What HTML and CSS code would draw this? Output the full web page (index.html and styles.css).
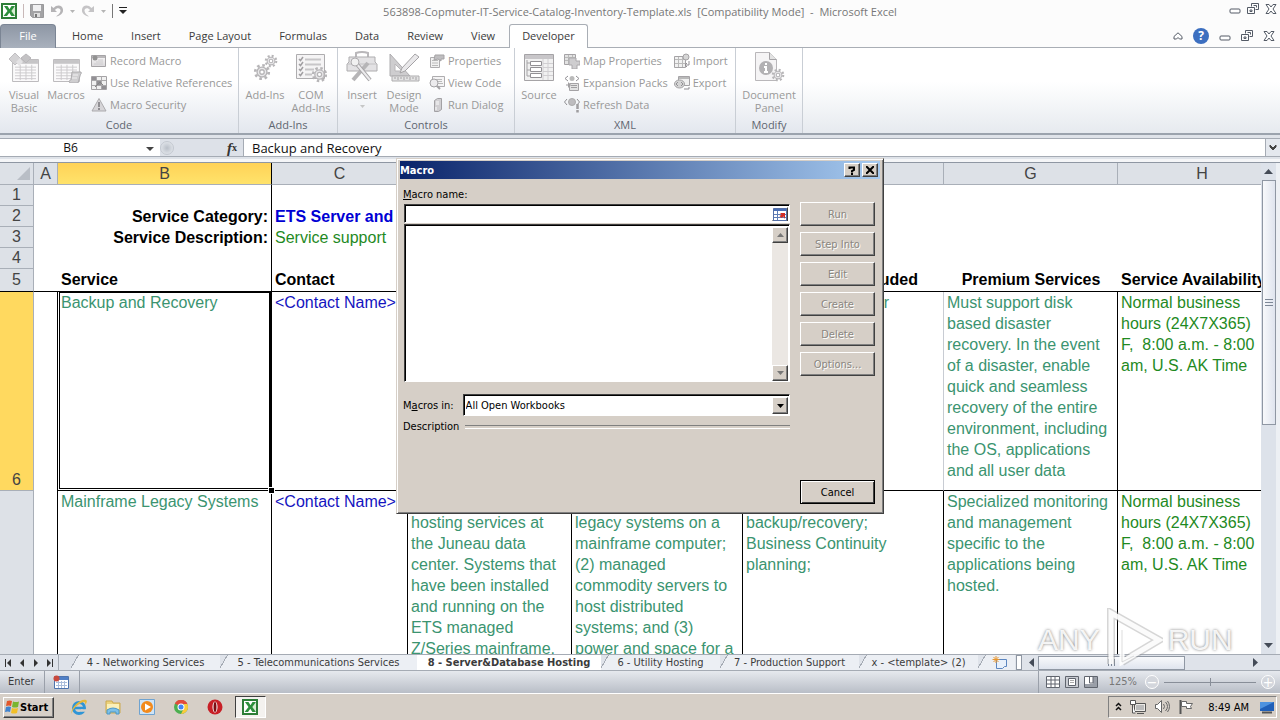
FILE: index.html
```html
<!DOCTYPE html>
<html lang="en">
<head>
	<meta charset="UTF-8">
	<meta name="viewport" content="width=device-width, initial-scale=1">
	<title>Microsoft Excel</title>
	<link rel="stylesheet" href="styles.css">
</head>
<body>

	<!-- shared icons -->
	<svg class="defs" width="0" height="0">
		<defs>
			<linearGradient id="grey" x1="0" y1="0" x2="0" y2="1"><stop offset="0" stop-color="#f8f7f8"/><stop offset="1" stop-color="#d2d0d3"/></linearGradient>
			<symbol id="excel" viewBox="0 0 16 16">
				<rect x="1" y="1" width="14" height="14" fill="#fff" stroke="#2c7d36" stroke-width="2"/>
				<path d="M10 4h4v8h-4z" fill="#d8ecd3"/>
				<path d="M3 3h3.500l2 3.200L10.500 3H14L10.300 8 14 13h-3.600L8.300 9.800 6 13H2.500l4-5z" fill="#2c8f3b"/>
			</symbol>
			<symbol id="minimize" viewBox="0 0 12 12"><rect x="1" y="6" width="10" height="4" rx="1" fill="#fff" stroke="#545b66"/></symbol>
			<symbol id="restore" viewBox="0 0 12 12"><path d="M4.500 3.500v-3h7v6h-3M.500 4.500h7v6h-7zM3 7h2v1.500H3zM6.500 2.500h3v2" fill="none" stroke="#545b66"/></symbol>
			<symbol id="close" viewBox="0 0 12 12"><path d="M1 1.500h3L6 4l2-2.500h3L8 6l3 4.500H8L6 8l-2 2.500H1L4 6z" fill="#fff" stroke="#545b66"/></symbol>
			<symbol id="gear" viewBox="0 0 20 20">
				<circle cx="10" cy="10" r="7.500" fill="none" stroke="#a5a3a6" stroke-width="3" stroke-dasharray="2.900 3"/>
				<circle cx="10" cy="10" r="5.500" fill="#e4e3e5" stroke="#a5a3a6" stroke-width="1.500"/>
				<circle cx="10" cy="10" r="2.500" fill="#fff" stroke="#a5a3a6" stroke-width="1.500"/>
			</symbol>
			<symbol id="sheetgrid" viewBox="0 0 28 24">
				<path d="M.500.500h27v23H.500z" fill="#fbfafb" stroke="#a8a6a9"/>
				<path d="M1 1h26v4H1z" fill="#b9b7ba"/>
				<path d="M3 8.500h22M3 11.500h22M3 14.500h22M3 17.500h22M3 20.500h22M8.500 6v16M14.500 6v16M20.500 6v16" stroke="#bfbdc0"/>
			</symbol>
		</defs>
	</svg>

	<!-- Title bar -->
	<header class="titlebar">
		<div class="quick">
			<svg width="16" height="16"><use href="#excel"/></svg>
			<span class="bar"></span>
			<button aria-label="Save"><svg width="14" height="14"><path d="M.500.500h13v13h-11l-2-2z" fill="#a3a3a5" stroke="#99999b"/><path d="M3 1h8v6H3z" fill="#f0f0f1"/><path d="M4 9h6v4H4z" fill="#ddd"/><path d="M5 10h2v3H5z" fill="#777"/></svg></button>
			<button aria-label="Undo"><svg width="14" height="14"><path d="M1 2v6h6L5 6c2-3 6-2 5.500 1C10 9.500 8 11 6 12.500c4-.500 7.500-3 7-7C12.500 1 7 0 3.500 4z" fill="#b5b4b6"/></svg></button>
			<svg width="5" height="3"><path d="M0 0h5L2.500 3z" fill="#b5b5b5"/></svg>
			<button aria-label="Redo"><svg width="14" height="14"><path d="M13 2v6H7l2-2C7 3 3 4 3.500 7c.500 2.500 2.500 4 4.500 5.500C4 12 .500 9.500 1 5.500 1.500 1 7 0 10.500 4z" fill="#c5c4c6"/></svg></button>
			<svg width="5" height="3"><path d="M0 0h5L2.500 3z" fill="#b5b5b5"/></svg>
			<span class="bar dark"></span>
			<button aria-label="Customize"><svg width="8" height="8"><path d="M0 .500h8" stroke="#222"/><path d="M0 3h8L4 7z" fill="#222"/></svg></button>
		</div>
		<h1>563898-Copmuter-IT-Service-Catalog-Inventory-Template.xls&nbsp; [Compatibility Mode] &nbsp;-&nbsp; Microsoft Excel</h1>
		<div class="winbtns">
			<button aria-label="Minimize"><svg width="12" height="12"><use href="#minimize"/></svg></button>
			<button aria-label="Restore"><svg width="12" height="12"><use href="#restore"/></svg></button>
			<button aria-label="Close"><svg width="12" height="12"><use href="#close"/></svg></button>
		</div>
	</header>

	<nav class="tabs">
		<button class="file">File</button>
		<button>Home</button>
		<button>Insert</button>
		<button>Page Layout</button>
		<button>Formulas</button>
		<button>Data</button>
		<button>Review</button>
		<button>View</button>
		<button class="current">Developer</button>
		<div class="winbtns docbtns">
			<button aria-label="Minimize ribbon"><svg width="10" height="8"><path d="M5 .800 9 4.500v2.500H6.500L5 5.500 3.500 7H1V4.500z" fill="#fff" stroke="#545b66"/></svg></button>
			<button aria-label="Help" class="help">?</button>
			<button aria-label="Minimize window"><svg width="12" height="12"><use href="#minimize"/></svg></button>
			<button aria-label="Restore window"><svg width="12" height="12"><use href="#restore"/></svg></button>
			<button aria-label="Close window"><svg width="12" height="12"><use href="#close"/></svg></button>
		</div>
	</nav>

	<!-- Ribbon -->
	<section class="ribbon">
		<div class="group code">
			<div class="tools">
				<button class="big" disabled>
					<svg width="32" height="32"><use href="#sheetgrid" x="4" y="8" width="27" height="23"/><path d="m7 2 6 6-6 6-6-6z" fill="#c9c7ca" stroke="#b2b0b3"/><path d="m18 3 5 4-5 5-5-5z" fill="#b5b3b6" stroke="#a8a6a9"/><path d="m12 7 3 4-4 4-3-4z" fill="#dddcde"/></svg>
					Visual<br>Basic
				</button>
				<button class="big" disabled>
					<svg width="32" height="32"><use href="#sheetgrid" x="3" y="8" width="27" height="23"/><path d="M22 21h9c1 2-1 2-1 4l-2 7h-8c-2-2 0-3 1-3z" fill="#c4c2c5" stroke="#99979a"/><path d="M23 24h5M22 27h5" stroke="#eee"/></svg>
					Macros
				</button>
				<div class="stack">
					<button disabled><svg width="16" height="16"><path d="M.500 2.500h14v11H.500z" fill="url(#grey)" stroke="#8f8d90"/><path d="M1 3h13v2H1z" fill="#a9a7aa"/><circle cx="4" cy="5" r="2.500" fill="#777"/><path d="M7 7h5M5 9h7M3 11h9" stroke="#c2c0c3"/></svg>Record Macro</button>
					<button disabled><svg width="16" height="16"><path d="M.500 1.500h15v13H.500z" fill="#eee" stroke="#8f8d90"/><path d="M1 5.500h14M1 10.500h14M5.500 1v13M10.500 1v13" stroke="#969497"/><path d="M1 2h4v3H1zM11 11h4v3h-4zM6 6h4v4H6z" fill="#77757a"/><path d="m4 12 5-5 3 3" fill="none" stroke="#666"/></svg>Use Relative References</button>
					<button disabled><svg width="16" height="16"><path d="M8 1.500 15 14H1z" fill="#d0ced1" stroke="#9b999c"/><path d="M8 5v5M8 11v2" stroke="#77757a" stroke-width="2"/></svg>Macro Security</button>
				</div>
			</div>
			<p>Code</p>
		</div>
		<div class="group addins">
			<div class="tools">
				<button class="big" disabled>
					<svg width="32" height="32"><use href="#gear" x="4" y="12" width="18" height="18"/><use href="#gear" x="15" y="3" width="14" height="14"/></svg>
					Add-Ins
				</button>
				<button class="big" disabled>
					<svg width="32" height="32"><path d="M1.500 3.500h28v24h-28z" fill="#f3f2f3" stroke="#9b999c"/><path d="M10 8.500h16M10 13.500h16M10 18.500h9M10 23.500h7" stroke="#bbb9bc" stroke-width="2"/><path d="m4 8 1.500 1.500L8 6M4 13l1.500 1.500L8 11M4 18l1.500 1.500L8 16M4 23l1.500 1.500L8 21" fill="none" stroke="#8a888b" stroke-width="1.500"/><use href="#gear" x="16" y="15" width="17" height="17"/></svg>
					COM<br>Add-Ins
				</button>
			</div>
			<p>Add-Ins</p>
		</div>
		<div class="group controls">
			<div class="tools">
				<button class="big" disabled>
					<svg width="32" height="32"><path d="M10 6V2q6-2 12 0v4" fill="none" stroke="#a8a6a9" stroke-width="2"/><path d="M3 6h26v5l2 2v7H1v-7l2-2z" fill="#dddcde" stroke="#9b999c"/><path d="M1 13h30" stroke="#b5b3b6"/><path d="M22 12 7 29" stroke="#a5a3a6" stroke-width="4"/><path d="M10 12l14 17" stroke="#8f8d90" stroke-width="4"/><path d="M10 12l14 17" stroke="#e8e7e9" stroke-width="2"/><circle cx="9" cy="11" r="4" fill="#eee" stroke="#9b999c"/></svg>
					Insert
					<svg class="drop" width="5" height="3"><path d="M0 0h5L2.500 3z" fill="#bbb"/></svg>
				</button>
				<button class="big" disabled>
					<svg width="32" height="32"><path d="M2 3v22h20z" fill="#c3c1c4" stroke="#9b999c"/><path d="M7 13v7h7z" fill="#fff" stroke="#a8a6a9"/><path d="M27 3l4 3-14 14-5 2 2-5z" fill="#e4e3e5" stroke="#8f8d90"/><path d="M4 25h27v5H4z" fill="#ddd" stroke="#9b999c"/><path d="M7 26v2M10 26v3M13 26v2M16 26v3M19 26v2M22 26v3M25 26v2M28 26v3" stroke="#8f8d90"/></svg>
					Design<br>Mode
				</button>
				<div class="stack">
					<button disabled><svg width="16" height="16"><path d="M1.500 4.500h9v10h-9z" fill="#eee" stroke="#9b999c"/><path d="M3 7.500h6M3 10h6M3 12.500h6" stroke="#aaa"/><path d="M6 2h9v4h-3v2l-3-2-4 1z" fill="#b0aeb1" stroke="#8f8d90"/></svg>Properties</button>
					<button disabled><svg width="16" height="16"><path d="M3.500 1.500h12v10h-12z" fill="#f3f2f3" stroke="#9b999c"/><path d="M6 4.500h7M6 6.500h7M9 8.500h5" stroke="#aaa"/><circle cx="5" cy="8" r="4" fill="#e8e7e9" stroke="#8f8d90"/><path d="m8 11 3 3" stroke="#8f8d90" stroke-width="2"/></svg>View Code</button>
					<button disabled><svg width="16" height="16"><path d="M5.500 3.500l3-2h4v11l-3 2h-4z" fill="#c9c7ca" stroke="#8f8d90"/><path d="M7 5h3M7 7h3M7 10v3" stroke="#fff"/></svg>Run Dialog</button>
				</div>
			</div>
			<p>Controls</p>
		</div>
		<div class="group xml">
			<div class="tools">
				<button class="big" disabled>
					<svg width="32" height="32"><path d="M1.500 3.500h29v26h-29z" fill="#eee" stroke="#8f8d90"/><path d="M2 4h28v4H2z" fill="#bbb9bc"/><path d="M20 8v21M25 8v21M20 12.500h10M20 16.500h10M20 20.500h10M20 24.500h10" stroke="#c6c4c7"/><path d="M4 9v16h4M4 12h4M4 19h4" fill="none" stroke="#8f8d90"/><path d="M7.500 10.500h11v4h-11zM7.500 16.500h11v4h-11zM7.500 22.500h11v4h-11z" fill="#fff" stroke="#77757a"/></svg>
					Source
				</button>
				<div class="stack">
					<button disabled><svg width="16" height="16"><path d="M.500 1.500h11v10H.500z" fill="#ddd" stroke="#8f8d90"/><path d="M1 4.500h10M1 7.500h10M4.500 2v9M8.500 2v9" stroke="#aaa"/><path d="M5 5h7v3h4v4h-3v4H8v-4H5z" fill="#c3c1c4" stroke="#969497"/></svg>Map Properties</button>
					<button disabled><svg width="16" height="16"><path d="M4 1 1 3.500 4 6M12 1l3 2.500L12 6" fill="none" stroke="#77757a"/><circle cx="8" cy="3.500" r="2.500" fill="#aaa"/><path d="M5.500 8.500h9v7h-9z" fill="#ddd" stroke="#8f8d90"/><path d="M7 10.500h6M7 12.500h6M2 10h5M4.500 7.500v5" stroke="#8a888b"/></svg>Expansion Packs</button>
					<button disabled><svg width="16" height="16"><path d="M3 2 .500 5 3 8M13 2l2.500 3L13 8" fill="none" stroke="#77757a"/><circle cx="8" cy="5" r="3.500" fill="#b0aeb1" stroke="#999"/><path d="M13.500 7v5M13.500 13v2.500" stroke="#8a888b" stroke-width="2.500"/></svg>Refresh Data</button>
				</div>
				<div class="stack">
					<button disabled><svg width="16" height="16"><path d="M.500 3.500h11v11H.500z" fill="#eee" stroke="#8f8d90"/><path d="M1 6.500h10M1 10.500h10M4.500 4v10M8.500 4v10" stroke="#aaa"/><circle cx="12" cy="4" r="3" fill="#ccc" stroke="#8f8d90"/><path d="M15 8v4h-4m2-2-2 2 2 2" fill="none" stroke="#77757a"/></svg>Import</button>
					<button disabled><svg width="16" height="16"><path d="M4.500 1.500h11v9h-11z" fill="#eee" stroke="#8f8d90"/><path d="M5 2h10v2H5z" fill="#aaa"/><ellipse cx="5.500" cy="9" rx="5" ry="4" fill="#ccc" stroke="#8f8d90"/><path d="m4 7-2 2 2 2m3-4 2 2-2 2M15 12v2h-5" fill="none" stroke="#77757a"/></svg>Export</button>
				</div>
			</div>
			<p>XML</p>
		</div>
		<div class="group modify">
			<div class="tools">
				<button class="big" disabled>
					<svg width="32" height="32"><path d="M2.500 1.500h14l7 7v21h-21z" fill="#f3f2f3" stroke="#a8a6a9"/><path d="M16.500 1.500v7h7" fill="#ddd" stroke="#8f8d90"/><circle cx="13" cy="17" r="7" fill="#a09ea1"/><path d="M13 12v2M11 16h2v5m-2 0h4" stroke="#fff" stroke-width="2" fill="none"/><use href="#gear" x="18" y="17" width="14" height="14"/></svg>
					Document<br>Panel
				</button>
			</div>
			<p>Modify</p>
		</div>
	</section>

	<!-- Formula bar -->
	<section class="formulabar">
		<input class="namebox" aria-label="Name box" value="B6">
		<span class="namedrop"><svg width="8" height="5"><path d="M0 0h8L4 4z" fill="#444"/></svg></span>
		<span class="fx"><span class="knob"></span><i>f</i><sub>x</sub></span>
		<input class="formula" aria-label="Formula" value="Backup and Recovery">
		<button class="expand" aria-label="Expand formula bar"><svg width="8" height="7"><path d="m1 1 3 3 3-3v2L4 6 1 3z" stroke="#444" fill="#444"/></svg></button>
	</section>

	<!-- Worksheet -->
	<main class="sheet">
		<div class="cells">
			<table>
				<colgroup><col class="c-row"><col class="c-a"><col class="c-b"><col class="c-c"><col class="c-d"><col class="c-e"><col class="c-f"><col class="c-g"><col class="c-h"></colgroup>
				<thead>
					<tr><th class="corner"><svg width="13" height="13"><path d="M13 0v13H0z" fill="#b9bec6"/></svg></th><th>A</th><th class="sel">B</th><th>C</th><th>D</th><th>E</th><th>F</th><th>G</th><th>H</th></tr>
				</thead>
				<tbody>
					<tr><th>1</th><td></td><td class="r"></td><td colspan="6"></td></tr>
					<tr><th>2</th><td></td><td class="r label">Service Category:</td><td colspan="6" class="category">ETS Server and</td></tr>
					<tr><th>3</th><td></td><td class="r label">Service Description:</td><td colspan="6" class="green">Service support</td></tr>
					<tr><th>4</th><td></td><td class="r"></td><td colspan="6"></td></tr>
					<tr class="heads"><th>5</th><td></td><td class="r">Service</td><td>Contact</td><td></td><td></td><td class="included">Included</td><td class="mid">Premium Services</td><td>Service Availability</td></tr>
					<tr class="row6">
						<th class="sel">6</th><td class="r open"></td>
						<td class="r sea active">Backup and Recovery</td>
						<td class="r contact">&lt;Contact Name&gt;</td>
						<td class="r"></td><td class="r"></td>
						<td class="lite sea tail">r</td>
						<td class="r sea">Must support disk<br>based disaster<br>recovery. In the event<br>of a disaster, enable<br>quick and seamless<br>recovery of the entire<br>environment, including<br>the OS, applications<br>and all user data</td>
						<td class="green">Normal business<br>hours (24X7X365)<br>F,&nbsp; 8:00 a.m. - 8:00<br>am, U.S. AK Time</td>
					</tr>
					<tr class="row7">
						<th></th><td class="r"></td>
						<td class="r sea">Mainframe Legacy Systems</td>
						<td class="r contact">&lt;Contact Name&gt;</td>
						<td class="r sea"><br>hosting services at<br>the Juneau data<br>center. Systems that<br>have been installed<br>and running on the<br>ETS managed<br>Z/Series mainframe.</td>
						<td class="r sea"><br>legacy systems on a<br>mainframe computer;<br>(2) managed<br>commodity servers to<br>host distributed<br>systems; and (3)<br>power and space for a</td>
						<td class="r sea"><br>backup/recovery;<br>Business Continuity<br>planning;</td>
						<td class="r sea">Specialized monitoring<br>and management<br>specific to the<br>applications being<br>hosted.</td>
						<td class="green">Normal business<br>hours (24X7X365)<br>F,&nbsp; 8:00 a.m. - 8:00<br>am, U.S. AK Time</td>
					</tr>
				</tbody>
			</table>
		</div>
		<div class="vscroll">
			<span class="arrow"><svg width="9" height="5"><path d="M0 5h9L4.500 0z" fill="#444b57"/></svg></span>
			<span class="thumb"><svg width="8" height="8"><path d="M0 .500h8M0 3.500h8M0 6.500h8" stroke="#7d8796"/></svg></span>
			<span class="arrow last"><svg width="9" height="5"><path d="M0 0h9L4.500 5z" fill="#444b57"/></svg></span>
		</div>
	</main>

	<footer class="sheettabs">
		<div class="arrows">
			<svg width="6" height="8"><path d="M.500 0v8" stroke="#333"/><path d="M6 0v8L2 4z" fill="#333"/></svg>
			<svg width="6" height="8"><path d="M5 0v8L1 4z" fill="#333"/></svg>
			<svg width="6" height="8"><path d="M1 0v8l4-4z" fill="#333"/></svg>
			<svg width="6" height="8"><path d="M5.500 0v8" stroke="#333"/><path d="M0 0v8l4-4z" fill="#333"/></svg>
		</div>
		<div class="names">
			<button>4 - Networking Services</button>
			<button>5 - Telecommunications Services</button>
			<button class="on">8 - Server&amp;Database Hosting</button>
			<button>6 - Utility Hosting</button>
			<button>7 - Production Support</button>
			<button>x - &lt;template&gt; (2)</button>
			<button aria-label="Insert worksheet"><svg width="16" height="13"><path d="M4.500 3.500h10v7h-2l-2 2h-6z" fill="#e9f1fb" stroke="#5c86c0"/><path d="M4 0v7M.500 3.500h7M1.500 1l5 5M6.500 1l-5 5" stroke="#e8962e"/></svg></button>
		</div>
		<span class="splitter"></span>
		<div class="hscroll">
			<svg width="5" height="9"><path d="M5 0v9L0 4.500z" fill="#444b57"/></svg>
			<span class="thumb"><svg width="8" height="7"><path d="M.500 0v7M3.500 0v7M6.500 0v7" stroke="#7d8796"/></svg></span>
			<svg class="last" width="5" height="9"><path d="M0 0v9l5-4.500z" fill="#444b57"/></svg>
		</div>
	</footer>

	<section class="status">
		<span class="mode">Enter</span>
		<button aria-label="Record macro"><svg width="16" height="14"><path d="M1.500 1.500h14v12h-14z" fill="#fff" stroke="#4d74ad"/><path d="M2 2h13v3H2z" fill="#4f7fc6"/><path d="M3 7.500h11M3 10.500h11M5.500 6v7M8.500 6v7M11.500 6v7" stroke="#a9bddb"/><circle cx="3.500" cy="3.500" r="3" fill="#c8493d"/></svg></button>
		<div class="zoom">
			<button aria-label="Normal"><svg width="14" height="12"><path d="M.500.500h13v11H.500zM1 4h12M1 8h12M5 1v10M9 1v10" fill="#fff" stroke="#60656e"/></svg></button>
			<button aria-label="Page layout"><svg width="14" height="12"><path d="M.500.500h13v11H.500z" fill="#c9ccd2" stroke="#60656e"/><path d="M3.500 2.500h7v7h-7z" fill="#fff" stroke="#60656e"/><path d="M5 4.500h4M5 6.500h4" stroke="#aaa"/></svg></button>
			<button aria-label="Page break"><svg width="14" height="12"><path d="M.500.500h13v11H.500z" fill="#fff" stroke="#60656e"/><path d="M9 1h4v10H1V8h8z" fill="#9a9fa8"/><path d="M5.500 1v6H9V1" fill="none" stroke="#60656e"/></svg></button>
			<span class="percent">125%</span>
			<button class="round" aria-label="Zoom out">−</button>
			<input type="range" aria-label="Zoom" min="0" max="100" value="50">
			<button class="round" aria-label="Zoom in">+</button>
		</div>
	</section>

	<!-- Taskbar -->
	<section class="taskbar">
		<button class="start"><svg width="16" height="16"><path d="M3 2q3-1 5 0L7 7Q5 6 2 7z" fill="#e2572b"/><path d="M9 2.500q3 1 6 0L14 8q-3 1-6 0z" fill="#79b530"/><path d="M2 8q3-1 5 0l-1 5q-2-1-5 0z" fill="#3f83cf"/><path d="M8 9q3 1 6 0l-1 5q-3 1-6 0z" fill="#f2bf27"/></svg>Start</button>
		<div class="apps">
			<button aria-label="Internet Explorer"><svg width="18" height="18"><circle cx="9" cy="10" r="5.500" fill="none" stroke="#2f95d6" stroke-width="3"/><path d="M4 10h11" stroke="#2f95d6" stroke-width="2.500"/><path d="M11 12.500h5" stroke="#d6cfc7" stroke-width="2.500"/><path d="M2 16C-1 12 10 0 16 2c2 1 0 4-1 5 1-3-1-4-4-2C6 8 1 13 2 16z" fill="#e6b93a"/></svg></button>
			<button aria-label="Explorer"><svg width="18" height="18"><path d="M2 3h6l1 2h7v10H2z" fill="#ecd27c" stroke="#cba94e"/><path d="M3 6h12v5H3z" fill="#fbf0b8"/><path d="M3 16v-4q6-4 12 0v4h-3v-2H6v2z" fill="#7cc0e8" stroke="#4b98c9"/></svg></button>
			<button aria-label="Media Player"><svg width="18" height="18"><path d="M1.500 1.500h15v15h-15z" fill="#cfe4f6" stroke="#6fa3d0"/><circle cx="9" cy="9" r="6" fill="#f28a1c"/><path d="m7 5.500 6 3.500-6 3.500z" fill="#fff"/></svg></button>
			<button aria-label="Chrome"><svg width="18" height="18"><circle cx="9" cy="9" r="7" fill="#4caf50"/><path d="M3 5.500A7 7 0 0 1 15.300 6H9z" fill="#e24a3b"/><path d="M3 5.500 9 9V6h6.300A7 7 0 0 0 3 5.500z" fill="#e24a3b"/><path d="M15.300 6A7 7 0 0 1 9 16l3-6V6z" fill="#fbcb3c"/><circle cx="9" cy="9" r="3.500" fill="#fff"/><circle cx="9" cy="9" r="2.500" fill="#4285f4"/></svg></button>
			<button aria-label="Opera"><svg width="18" height="18"><circle cx="9" cy="9" r="7.500" fill="#c81f26"/><ellipse cx="9" cy="9" rx="2.500" ry="5.500" fill="#fff"/><ellipse cx="9" cy="9" rx="1.500" ry="5" fill="#7d0d12"/></svg></button>
			<button class="on" aria-label="Excel"><svg width="16" height="16"><use href="#excel"/></svg></button>
		</div>
		<div class="tray">
			<svg width="7" height="10"><path d="m1 4 2.500-2.500L6 4M1 8l2.500-2.500L6 8" fill="none" stroke="#111" stroke-width="1.500"/></svg>
			<svg width="16" height="16"><path d="M4.500 4.500h11v8h-11z" fill="#eceae6" stroke="#555"/><path d="M6 6h8v5H6z" fill="#bbb"/><path d="M7 14.500h7" stroke="#555"/><path d="M.500 1.500h5v4h-5zM2.500 6v8h3" fill="#fff" stroke="#555"/></svg>
			<svg width="16" height="16"><path d="M1.500 5.500h2l4-4v12l-4-4h-2z" fill="#fff" stroke="#666"/><path d="M9.500 5q2 2.500 0 5M11.500 3q4 4.500 0 9M13.500 2q4 5.500 0 11" fill="none" stroke="#666"/></svg>
			<svg width="16" height="16"><path d="M2.500 1v14" stroke="#555" stroke-width="2"/><path d="M3.500 2.500h5v2h6l-2 3 1 2h-5v-2h-5z" fill="#fff" stroke="#666"/></svg>
			<time>8:49 AM</time>
			<svg width="16" height="14"><path d="M1 2h14v9H1z" fill="#1f5fb8"/><path d="M1 2h14L1 9z" fill="#4d92df"/><path d="M3 12.500h10" stroke="#555" stroke-width="2"/></svg>
		</div>
	</section>

	<!-- Macro dialog -->
	<div class="dialog" role="dialog" aria-labelledby="dlgtitle">
		<div class="caption">
			<h2 id="dlgtitle">Macro</h2>
			<button aria-label="Help"><svg width="8" height="9"><path d="M1.500 3V1.500h4.500V4L4 5v1.500M4 7v2" fill="none" stroke="#000" stroke-width="2"/></svg></button>
			<button aria-label="Close"><svg width="8" height="8"><path d="m0 0 8 8M8 0 0 8" stroke="#000" stroke-width="2"/></svg></button>
		</div>
		<div class="body">
			<div class="fields">
				<label for="macro"><u>M</u>acro name:</label>
				<div class="sunken ref">
					<input id="macro" type="text">
					<button aria-label="Select range"><svg width="14" height="13"><path d="M.500.500h13v12H.500z" fill="#fff" stroke="#5570a8"/><path d="M1 1h12v2H1z" fill="#4a6fb5"/><path d="M1 6.500h12M1 9.500h12M4.500 3v9" stroke="#5f7db5"/><path d="M12 11V5H7l1.500 1.500-2 1.500 2 2 2-1.500z" fill="#d22c24"/></svg></button>
				</div>
				<div class="sunken list">
					<select multiple aria-label="Macros"></select>
					<div class="scroll">
						<button disabled aria-label="Up"><svg width="7" height="4"><path d="M0 4h7L3.500 0z" fill="#777"/></svg></button>
						<button disabled aria-label="Down"><svg width="7" height="4"><path d="M0 0h7L3.500 4z" fill="#777"/></svg></button>
					</div>
				</div>
				<div class="macrosin">
					<label for="where">M<u>a</u>cros in:</label>
					<div class="sunken combo">
						<select id="where"><option>All Open Workbooks</option></select>
						<span><svg width="7" height="4"><path d="M0 0h7L3.500 4z"/></svg></span>
					</div>
				</div>
				<div class="description">Description</div>
			</div>
			<div class="actions">
				<button disabled>Run</button>
				<button disabled>Step Into</button>
				<button disabled>Edit</button>
				<button disabled>Create</button>
				<button disabled>Delete</button>
				<button disabled>Options...</button>
				<button class="cancel">Cancel</button>
			</div>
		</div>
	</div>

	<!-- Watermark -->
	<div class="watermark">
		<span>ANY</span>
		<svg width="58" height="64"><path d="M6 56V5l48 27L17 54" fill="none" stroke="#999" stroke-opacity=".4" stroke-width="8"/><path d="M6 56V5l48 27L17 54V22l17 10-17 10" fill="none" stroke="#fff" stroke-opacity=".9" stroke-width="5"/><path d="M17 22v32l12-6" fill="none" stroke="#bbb" stroke-opacity=".5"/></svg>
		<span>RUN</span>
	</div>

</body>
</html>
```
FILE: styles.css
```css
* {
	box-sizing: border-box;
}
body {
	margin: 0;
	height: 100vh;
	display: flex;
	flex-direction: column;
	overflow: hidden;
	position: relative;
	background: #fff;
	font-family: "Open Sans", "Noto Sans", sans-serif;
	font-size: 11px;
	color: #3b3b3b;
}
button, input, select {
	font: inherit;
	color: inherit;
	margin: 0;
	padding: 0;
	border: 0;
	background: none;
	border-radius: 0;
}
svg {
	display: block;
	flex: none;
}
.defs {
	position: absolute;
}
h1, h2, p {
	margin: 0;
	font-size: 11px;
	font-weight: normal;
}

/* TITLE BAR */
.titlebar {
	height: 24px;
	flex: none;
	display: grid;
	grid-template-columns: 1fr auto 1fr;
	align-items: center;
	background: #fcfcfc;
}
.titlebar h1 {
	color: #777;
	padding-bottom: 1px;
}
.quick {
	display: flex;
	align-items: center;
	gap: 6px;
	padding: 0 0 2px 1px;
}
.bar {
	width: 1px;
	height: 14px;
	background: #c8b8b8;
}
.bar.dark {
	background: #777;
}
.winbtns {
	display: flex;
	align-items: center;
	justify-content: flex-end;
	gap: 6px;
	padding: 0 3px 6px 0;
}

/* RIBBON TABS */
.tabs {
	height: 24px;
	flex: none;
	display: flex;
	background: #fcfcfc;
	border-bottom: 1px solid #a9aeb5;
}
.tabs > button {
	padding: 0 14px 1px;
	height: 24px;
}
.tabs .file {
	width: 56px;
	margin-right: 2px;
	padding-bottom: 2px;
	color: #fff;
	background: linear-gradient(#8e97a5, #a9b1bd);
	border: 1px solid #7b8594;
	border-bottom: 0;
	border-radius: 4px 4px 0 0;
}
.tabs .current {
	background: #fff;
	border: 1px solid #a9aeb5;
	border-bottom: 0;
	border-radius: 3px 3px 0 0;
	padding: 0 12px 2px;
}
.docbtns {
	margin-left: auto;
	gap: 10px;
	padding: 0 5px 0 0;
}
.help {
	width: 16px;
	height: 16px;
	line-height: 16px;
	border-radius: 8px;
	background: #3c6fc0;
	color: #fff;
	font-size: 12px;
	font-weight: bold;
}

/* RIBBON */
.ribbon {
	height: 87px;
	flex: none;
	display: flex;
	background: linear-gradient(#fff 40%, #e6eaef);
	border-bottom: 2px solid #9ba3ad;
}
.group {
	display: flex;
	flex-direction: column;
	justify-content: space-between;
	padding: 3px 3px 1px;
	border-right: 1px solid #c9ced5;
	background: linear-gradient(#fff 40%, #e3e7ee);
}
.group p {
	text-align: center;
	line-height: 14px;
	color: #5f6670;
}
.code { width: 239px; }
.addins { width: 99px; }
.controls { width: 177px; }
.xml { width: 221px; }
.modify { width: 67px; }
.tools {
	display: flex;
	color: #999;
}
.tools svg {
	opacity: .8;
}
.big {
	min-width: 42px;
	display: block;
	line-height: 13px;
	align-self: flex-start;
}
.addins .big {
	min-width: 46px;
}
.modify .big {
	min-width: 60px;
}
.big svg {
	margin: 0 auto 5px;
}
.big .drop {
	margin: 4px auto 0;
}
.stack {
	margin-left: 4px;
}
.stack + .stack {
	margin-left: 6px;
}
.stack button {
	display: flex;
	align-items: center;
	gap: 3px;
	height: 22px;
	margin-top: -1px;
	margin-bottom: 1px;
	line-height: 16px;
	white-space: nowrap;
}

/* FORMULA BAR */
.formulabar {
	height: 27px;
	flex: none;
	display: flex;
	padding: 3px 0 2px;
	background: #dfe3e9;
	border-bottom: 3px solid #f5f6f8;
	font-size: 12px;
	color: #111;
}
.formulabar > * {
	border: 1px solid #a5abb4;
	border-width: 1px 0;
	background: #fff;
}
.formulabar .namebox {
	width: 141px;
	text-align: center;
}
.namedrop {
	width: 19px;
	padding: 8px 0 0 5px;
}
.formulabar .fx {
	width: 83px;
	display: flex;
	align-items: center;
	background: #dde1e8;
	font-family: "Liberation Serif", serif;
	font-weight: bold;
	font-size: 15px;
	line-height: 18px;
	color: #333;
}
.fx .knob {
	width: 14px;
	height: 14px;
	margin-right: auto;
	border-radius: 7px;
	background: radial-gradient(#b9bfc8, #eceff3);
	border: 1px solid #c3c8d0;
}
.fx sub {
	font-size: 10px;
	padding-right: 6px;
}
.formulabar .formula {
	flex: 1;
	border-left: 1px solid #a5abb4;
	padding-left: 8px;
	font-size: 13px;
}
.formulabar .expand {
	width: 15px;
	padding-left: 3px;
	background: #e4e8ee;
	border-left: 1px solid #a5abb4;
}

/* WORKSHEET */
.sheet {
	flex: 1;
	min-height: 0;
	display: flex;
	border-top: 1px solid #8f97a3;
}
.cells {
	flex: 1;
	min-width: 0;
	overflow: hidden;
}
table {
	table-layout: fixed;
	width: 1318px;
	border-spacing: 0;
	font-family: "Liberation Sans", Arial, sans-serif;
	font-size: 16px;
	line-height: 21px;
	color: #000;
}
.c-row { width: 34px; }
.c-a { width: 24px; }
.c-b { width: 214px; }
.c-c { width: 136px; }
.c-d { width: 164px; }
.c-e { width: 171px; }
.c-f { width: 201px; }
.c-g { width: 174px; }
.c-h { width: 200px; }
th {
	padding: 0;
	font-weight: normal;
	line-height: 20px;
	color: #444;
	background: #dde1e7;
	border-right: 1px solid #a9afb8;
	border-bottom: 1px solid #a9afb8;
}
thead th {
	height: 22px;
}
thead th:last-child {
	padding-right: 31px;
}
thead th.sel {
	background: linear-gradient(#ffd257, #ffe36b);
	border-right-color: #000;
}
tbody th.sel {
	background: #ffd95f;
	vertical-align: bottom;
}
.corner svg {
	margin-left: 17px;
}
td {
	padding: 0 3px;
	height: 21px;
	vertical-align: top;
	white-space: nowrap;
}
td.r {
	border-right: 1px solid #000;
}
td.lite {
	border-right: 1px solid #c8ccd3;
}
.label {
	text-align: right;
	font-weight: bold;
}
.category {
	font-weight: bold;
	color: #0000d4;
}
.green {
	color: #1f8a1f;
}
.sea {
	color: #3b9470;
}
.contact {
	color: #1414c0;
}
.heads td {
	font-weight: bold;
}
.heads td, .heads th {
	height: 23px;
	border-bottom: 1px solid #000;
}
.heads .included {
	text-align: right;
	padding-right: 26px;
}
.mid {
	text-align: center;
}
.tail {
	text-align: right;
	padding-right: 54px;
}
.row6 td {
	height: 199px;
	border-bottom: 1px solid #000;
}
.row6 .open {
	border-bottom: 0;
}
.row7 td {
	height: 240px;
}
/* double frame of the cell being edited */
.active {
	position: relative;
}
.active::after {
	content: "";
	position: absolute;
	top: 0;
	right: -1px;
	bottom: 1px;
	left: 1px;
	border: 1px solid #000;
	border-right-width: 3px;
}
/* fill handle */
.active::before {
	content: "";
	position: absolute;
	right: -3px;
	bottom: -3px;
	width: 5px;
	height: 5px;
	background: #000;
	box-shadow: 0 0 0 1px #fff;
	z-index: 1;
}

/* SCROLLBARS */
.vscroll {
	width: 19px;
	display: flex;
	flex-direction: column;
	align-items: center;
	background: #dde2ea;
	border-right: 4px solid #edf0f4;
}
.vscroll .arrow {
	padding: 6px 0;
}
.vscroll .last {
	margin-top: auto;
}
.vscroll .thumb {
	width: 14px;
	height: 245px;
	display: flex;
	align-items: center;
	justify-content: center;
	background: linear-gradient(90deg, #f8f9fb, #dfe4ee);
	border: 1px solid #8f97a3;
}

/* SHEET TABS, STATUS, TASKBAR */
.sheettabs, .status, .taskbar, .dialog {
	font-family: "DejaVu Sans Condensed", "DejaVu Sans", sans-serif;
	font-size: 11px;
}
.sheettabs {
	height: 17px;
	flex: none;
	display: flex;
	background: #dfe3ea;
	border-top: 1px solid #a5abb4;
	border-bottom: 1px solid #a5abb4;
}
.arrows {
	display: flex;
	align-items: center;
	gap: 8px;
	width: 59px;
	padding-left: 5px;
	border-right: 1px solid #a5abb4;
}
.names {
	flex: 1;
	display: flex;
	padding-left: 12px;
}
.names button {
	width: 119px;
	line-height: 15px;
	white-space: nowrap;
	background: linear-gradient(120deg, transparent 6px, #a5abb4 6px, #a5abb4 7px, #eceff4 7px);
}
.names button:nth-child(1) { width: 149px; }
.names button:nth-child(2) { width: 197px; }
.names button:nth-child(5) { width: 139px; }
.names .on {
	width: 184px;
	font-weight: bold;
	background: #fff;
}
.names button:last-child {
	width: 37px;
	padding-left: 14px;
}
.splitter {
	width: 6px;
	border: 1px solid #8f97a3;
	background: #fff;
}
.hscroll {
	width: 258px;
	display: flex;
	align-items: center;
	gap: 4px;
	padding: 0 22px 0 7px;
}
.hscroll .thumb {
	width: 147px;
	height: 14px;
	display: flex;
	align-items: center;
	justify-content: center;
	background: linear-gradient(#f8f9fb, #dfe4ee);
	border: 1px solid #8f97a3;
}
.hscroll .last {
	margin-left: auto;
}
.status {
	height: 22px;
	flex: none;
	display: flex;
	align-items: stretch;
	background: linear-gradient(#e6e9ee, #b9bec7);
	line-height: 22px;
}
.mode {
	width: 45px;
	padding-left: 8px;
	border-right: 1px solid #9aa0aa;
}
.status > button {
	width: 35px;
	padding-left: 8px;
	border-right: 1px solid #9aa0aa;
}
.zoom {
	margin-left: auto;
	display: flex;
	align-items: center;
	gap: 5px;
	padding: 0 5px 0 7px;
	border-left: 1px solid #9aa0aa;
}
.percent {
	padding: 0 3px 0 6px;
	color: #777;
}
.round {
	width: 14px;
	height: 14px;
	line-height: 10px;
	border: 1px solid #fff;
	border-radius: 7px;
	color: #fff;
	background: #d3d6dc;
	font-size: 14px;
}
.zoom input {
	appearance: none;
	width: 92px;
	height: 10px;
	background: linear-gradient(#888e98, #888e98) center / 100% 1px no-repeat;
}
.zoom input::-webkit-slider-thumb {
	appearance: none;
	width: 1px;
	height: 8px;
	background: #888e98;
}
.taskbar {
	height: 27px;
	flex: none;
	display: flex;
	align-items: center;
	padding: 0 3px;
	background: #d6cfc7;
	border-top: 1px solid #fff;
	color: #000;
}
.start {
	width: 51px;
	height: 21px;
	display: flex;
	align-items: center;
	font-weight: bold;
	border: 1px solid;
	border-color: #fff #404040 #404040 #fff;
	box-shadow: inset -1px -1px #808080;
}
.apps {
	display: flex;
	align-items: center;
	gap: 16px;
	padding-left: 16px;
}
.apps .on {
	width: 31px;
	height: 22px;
	margin-left: -5px;
	padding-left: 6px;
	background: #f4f2ef;
	border: 1px solid;
	border-color: #404040 #fff #fff #404040;
}
.tray {
	margin-left: auto;
	height: 22px;
	display: flex;
	align-items: center;
	gap: 8px;
	padding: 0 1px 0 6px;
	border: 1px solid;
	border-color: #808080 #fff #fff #808080;
}
.tray time {
	padding: 0 2px 0 6px;
}

/* MACRO DIALOG */
.dialog {
	position: absolute;
	left: 396px;
	top: 158px;
	width: 488px;
	padding: 2px 3px 3px;
	background: #d6cfc7;
	border: 1px solid;
	border-color: #d6cfc7 #404040 #404040 #d6cfc7;
	box-shadow: inset 1px 1px #fff, inset -1px -1px #808080;
	color: #000;
}
.caption {
	height: 18px;
	display: flex;
	align-items: center;
	gap: 2px;
	padding-right: 2px;
	background: linear-gradient(90deg, #0a246a, #a6caf0);
}
.caption h2 {
	flex: 1;
	color: #fff;
	font-weight: bold;
}
.caption button, .scroll button, .ref button, .combo span {
	width: 16px;
	height: 14px;
	display: flex;
	align-items: center;
	justify-content: center;
	background: #d6cfc7;
	border: 1px solid;
	border-color: #fff #404040 #404040 #fff;
	box-shadow: inset -1px -1px #808080;
}
.body {
	display: flex;
	gap: 10px;
	padding: 9px 5px 6px 3px;
}
.fields {
	flex: 1;
	display: flex;
	flex-direction: column;
}
.fields label {
	line-height: 13px;
}
.sunken {
	display: flex;
	margin-left: 1px;
	background: #fff;
	border: 1px solid;
	border-color: #404040 #fff #fff #404040;
	box-shadow: inset 1px 1px #000;
}
.ref {
	height: 19px;
	margin-top: 3px;
	margin-bottom: 1px;
	padding: 2px 1px 1px 2px;
}
.ref input {
	flex: 1;
	min-width: 0;
}
.list {
	height: 158px;
	padding: 2px 1px 0 2px;
}
.list select {
	flex: 1;
	height: 100%;
	outline: 0;
	overflow: hidden;
}
.scroll {
	width: 16px;
	display: flex;
	flex-direction: column;
	justify-content: space-between;
	background: #ebe7e3;
}
.scroll button {
	height: 16px;
}
.macrosin {
	display: flex;
	align-items: center;
	gap: 8px;
	padding-top: 12px;
}
.combo {
	flex: 1;
	height: 22px;
	padding: 2px 1px 1px 2px;
}
.combo select {
	flex: 1;
	appearance: none;
}
.combo span {
	height: 17px;
}
.description {
	display: flex;
	align-items: center;
	gap: 6px;
	line-height: 13px;
	padding-top: 4px;
}
.description::after {
	content: "";
	flex: 1;
	height: 2px;
	border-top: 1px solid #808080;
	border-bottom: 1px solid #fff;
}
.actions {
	width: 75px;
	display: flex;
	flex-direction: column;
	gap: 6px;
	padding-top: 14px;
}
.actions button {
	height: 24px;
	border: 1px solid;
	border-color: #fff #404040 #404040 #fff;
	box-shadow: inset -1px -1px #808080;
}
.actions button:disabled {
	color: #8a8680;
	text-shadow: 1px 1px #fff;
}
.actions .cancel {
	margin-top: 98px;
	border-color: #000;
	box-shadow: inset 1px 1px #fff, inset -1px -1px #404040;
}

/* WATERMARK */
.watermark {
	position: absolute;
	left: 1038px;
	top: 608px;
	display: flex;
	align-items: center;
	gap: 5px;
	font-family: "Liberation Sans", Arial, sans-serif;
	font-size: 30px;
	color: rgba(255, 255, 255, .9);
	text-shadow: 0 0 3px rgba(90, 90, 90, .8);
	pointer-events: none;
}
```
